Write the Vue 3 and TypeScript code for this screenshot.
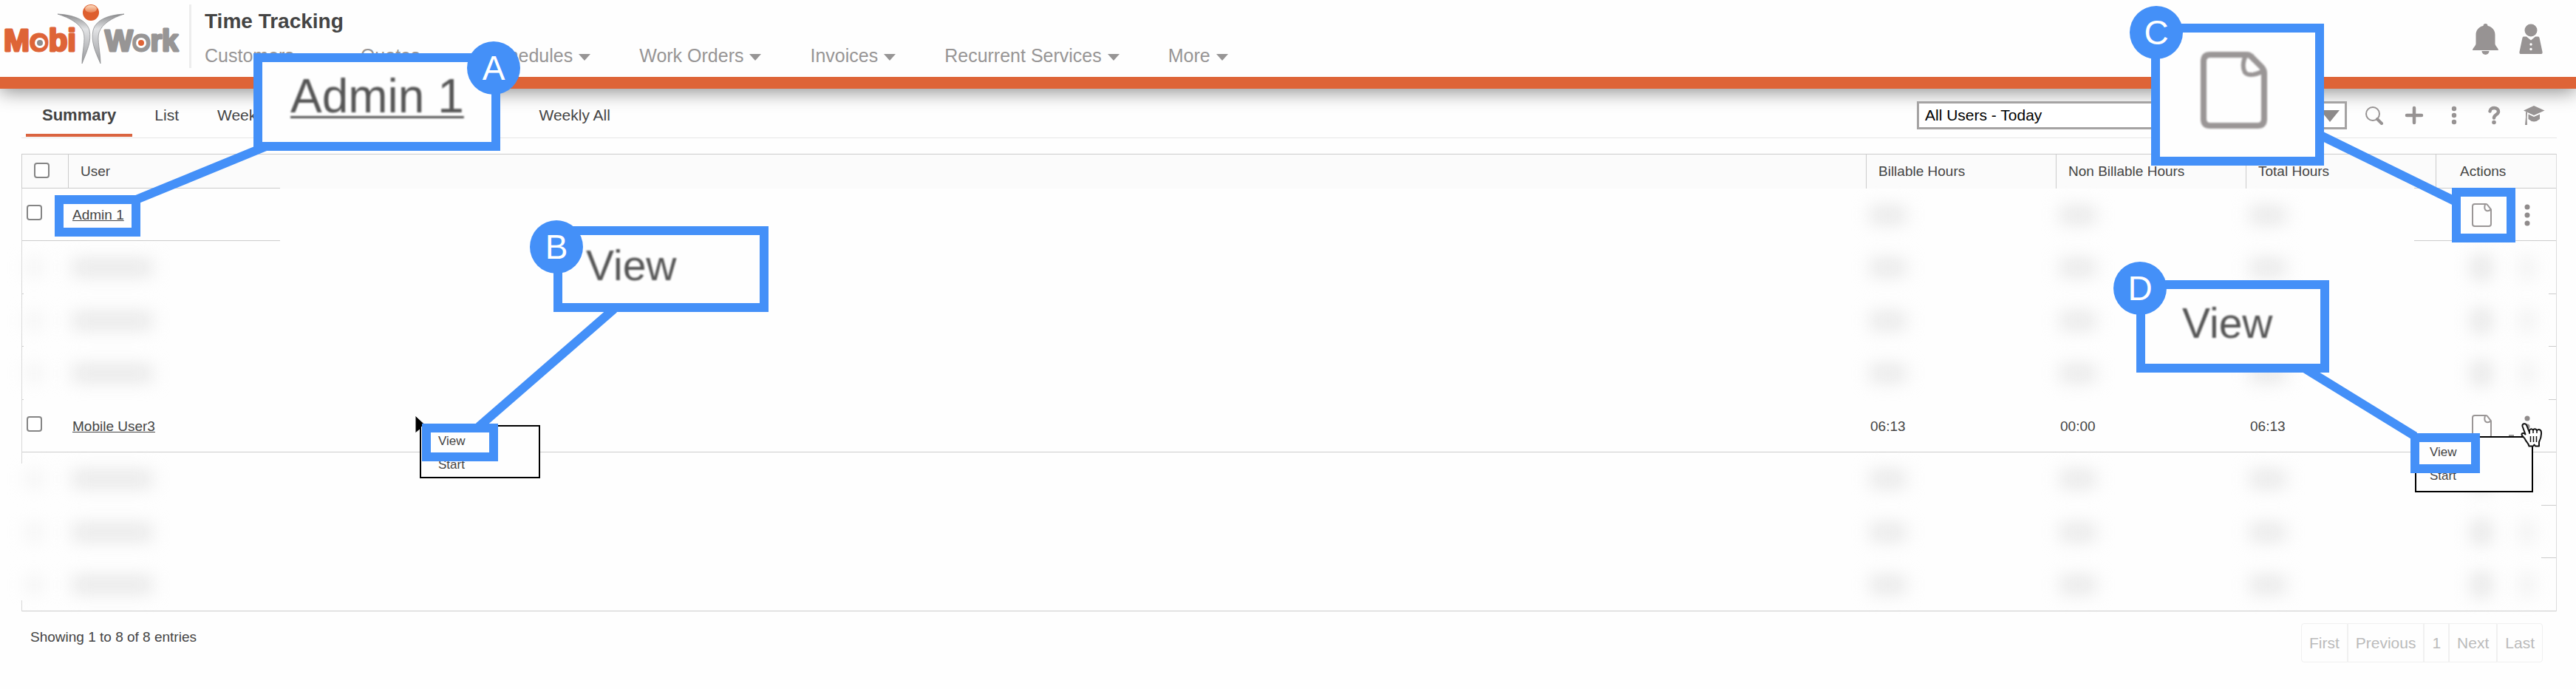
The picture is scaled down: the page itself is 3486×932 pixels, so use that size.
<script setup lang="ts">
interface Row {
  user: string
  hours: string[]
  masked: boolean
  actions: boolean
  edge: string
}

const navItems: string[] = ['Customers', 'Quotes', 'Schedules', 'Work Orders', 'Invoices', 'Recurrent Services', 'More']
const tabs: string[] = ['Summary', 'List', 'Weekly', 'Weekly All']
const hourColumns: string[] = ['Billable Hours', 'Non Billable Hours', 'Total Hours']
const pages: string[] = ['First', 'Previous', '1', 'Next', 'Last']

const masked = (edge: string): Row => ({ user: '', hours: ['', '', ''], masked: true, actions: false, edge })

const rows: Row[] = [
  { user: 'Admin 1', hours: ['', '', ''], masked: false, actions: true, edge: 'edge-wide' },
  masked('edge-tick'),
  masked('edge-tick'),
  masked('edge-tick'),
  { user: 'Mobile User3', hours: ['06:13', '00:00', '06:13'], masked: false, actions: true, edge: 'edge-full' },
  masked('edge-right fade-top'),
  masked('edge-right fade-all'),
  masked('edge-full fade-bottom'),
]
</script>

<template>
  <div class="page">
    <header class="header">
      <a class="logo" href="#" aria-label="MobiWork">
        <svg width="256" height="92" viewBox="0 0 256 92">
          <defs>
            <linearGradient id="wing" x1="0" y1="0" x2="0" y2="1">
              <stop offset="0" stop-color="#8a8a8c" />
              <stop offset="0.3" stop-color="#e2e3e5" />
              <stop offset="1" stop-color="#97989b" />
            </linearGradient>
            <linearGradient id="shine" x1="0" y1="0" x2="0" y2="1">
              <stop offset="0" stop-color="#fbd9bd" />
              <stop offset="1" stop-color="#e98354" />
            </linearGradient>
          </defs>
          <text class="brand brand-mobi" x="5" y="69">Mobi</text>
          <text class="brand brand-work" x="142" y="69">Work</text>
          <circle cx="54" cy="58" r="7" fill="#fff" />
          <circle cx="54" cy="58" r="4" fill="#8f8d8d" />
          <circle cx="191" cy="58" r="7" fill="#fff" />
          <circle cx="191" cy="58" r="4" fill="#de6437" />
          <path d="M78 19C98 20 117 26 121 41C124 56 118 68 111 86C111 70 116 54 113 44C109 32 94 24 78 19Z" fill="url(#wing)" stroke="#85868a" stroke-width="0.7" />
          <path d="M168 19C148 20 130 26 126 41C123 56 128 68 136 86C136 70 131 54 134 44C138 32 152 24 168 19Z" fill="url(#wing)" stroke="#85868a" stroke-width="0.7" />
          <circle cx="123" cy="17" r="11" fill="#de5f2e" />
          <ellipse cx="123" cy="12" rx="8" ry="5" fill="url(#shine)" />
        </svg>
      </a>
      <div class="heading">
        <h1>Time Tracking</h1>
        <nav class="nav">
          <a v-for="item in navItems" :key="item" href="#">
            {{ item }}
            <svg width="16" height="13" viewBox="0 0 16 13"><path d="M0 4H16L8 13Z" fill="currentColor" /></svg>
          </a>
        </nav>
      </div>
      <div class="account">
        <button aria-label="Notifications">
          <svg width="35" height="42" viewBox="0 0 35 42">
            <path d="M17.500 0C19.500 0 20.500 1.300 20.500 3C26.500 4 30.500 9 30.500 15V27C30.500 30 35 33 35 36H0C0 33 4.500 30 4.500 27V15C4.500 9 8.500 4 14.500 3C14.500 1.300 15.500 0 17.500 0Z" fill="currentColor" />
            <path d="M12.500 37H22.500A5 5 0 0 1 12.500 37Z" fill="currentColor" />
          </svg>
        </button>
        <button aria-label="Profile">
          <svg width="32" height="42" viewBox="0 0 32 42">
            <circle cx="16" cy="9" r="8.500" fill="currentColor" />
            <path d="M6 17.500H10L16 22.500L22 17.500H26Q27 17.500 27.500 19L31.500 38Q32 41 30 41H2Q0 41 .5 38L4.500 19Q5 17.500 6 17.500Z" fill="currentColor" />
            <circle cx="16" cy="28" r="1.700" fill="#fff" />
            <circle cx="16" cy="34.500" r="1.700" fill="#fff" />
          </svg>
        </button>
      </div>
    </header>

    <div class="toolbar">
      <nav class="tabs">
        <a v-for="(tab, i) in tabs" :key="tab" href="#" :class="{ active: i === 0, last: i === 3 }">{{ tab }}</a>
      </nav>
      <div class="tools">
        <div class="filter">
          <select aria-label="Filter">
            <option>All Users - Today</option>
          </select>
          <svg width="26" height="16" viewBox="0 0 26 16"><path d="M0 0H26L13 16Z" fill="#8d8a8a" /></svg>
        </div>
        <button aria-label="Search">
          <svg width="26" height="26" viewBox="0 0 26 26" fill="none" stroke="currentColor">
            <circle cx="11" cy="11" r="9" stroke-width="2" />
            <path d="M17 18L23 24" stroke-width="4" stroke-linecap="round" />
          </svg>
        </button>
        <button aria-label="Add">
          <svg width="26" height="26" viewBox="0 0 26 26"><path d="M13 3V23M3 13H23" stroke="currentColor" stroke-width="4.500" stroke-linecap="round" /></svg>
        </button>
        <button aria-label="More options">
          <svg width="26" height="26" viewBox="0 0 26 26" fill="currentColor">
            <circle cx="13" cy="4" r="3.200" /><circle cx="13" cy="13" r="3.200" /><circle cx="13" cy="22" r="3.200" />
          </svg>
        </button>
        <button aria-label="Help">
          <svg width="26" height="26" viewBox="0 0 26 26">
            <path d="M7.500 7.500C8 1.500 19 1.500 19 8C19 12 13 12 13 16.500" fill="none" stroke="currentColor" stroke-width="4.500" stroke-linecap="round" />
            <circle cx="13" cy="22.500" r="2.800" fill="currentColor" />
          </svg>
        </button>
        <button aria-label="Training">
          <svg width="30" height="28" viewBox="0 0 30 28" fill="currentColor">
            <path d="M15 1L29.500 7.500L15 14L1 7.500Z" />
            <path d="M7.500 12.500L15 16L23 12.500V19Q15 26 7.500 19Z" />
            <path d="M4 9L6 10L5.500 17L6 27H3L4 17Z" />
          </svg>
        </button>
      </div>
    </div>

    <main class="content">
      <table>
        <colgroup>
          <col class="col-check" /><col />
          <col v-for="c in hourColumns" :key="c" class="col-hours" />
          <col class="col-actions" />
        </colgroup>
        <thead>
          <tr class="edge-wide">
            <th class="check"><input type="checkbox" aria-label="Select all" /></th>
            <th>User</th>
            <th v-for="c in hourColumns" :key="c">{{ c }}</th>
            <th class="actions-head">Actions</th>
          </tr>
        </thead>
        <tbody>
          <tr v-for="(row, i) in rows" :key="i" :class="[row.edge, { masked: row.masked }]">
            <td class="check">
              <i v-if="row.masked" class="smudge smudge-check"></i>
              <input v-else type="checkbox" :aria-label="row.user" />
            </td>
            <td>
              <i v-if="row.masked" class="smudge smudge-user"></i>
              <a v-else href="#">{{ row.user }}</a>
            </td>
            <td v-for="(h, n) in row.hours" :key="n">
              <template v-if="h">{{ h }}</template>
              <i v-else class="smudge smudge-hours"></i>
            </td>
            <td>
              <div class="row-actions">
                <template v-if="row.actions">
                  <button aria-label="View details">
                    <svg width="27" height="32" viewBox="0 0 27 32" fill="none" stroke="#9a9696" stroke-width="2">
                      <path d="M4 1H19Q20 1 21 2L25 7Q26 8 26 9V28Q26 31 23 31H4Q1 31 1 28V4Q1 1 4 1Z" />
                      <path d="M18 1Q16 9 20 10Q23 11 26 8" />
                    </svg>
                  </button>
                  <button aria-label="Row menu">
                    <svg width="8" height="30" viewBox="0 0 8 30" fill="#8f8b8b">
                      <circle cx="4" cy="4" r="3.500" /><circle cx="4" cy="15" r="3.500" /><circle cx="4" cy="26" r="3.500" />
                    </svg>
                  </button>
                </template>
                <template v-else>
                  <i class="smudge smudge-doc"></i>
                  <i class="smudge smudge-dots"></i>
                </template>
              </div>
            </td>
          </tr>
        </tbody>
      </table>
      <footer class="footer">
        <span>Showing 1 to 8 of 8 entries</span>
        <div class="pager">
          <button v-for="p in pages" :key="p">{{ p }}</button>
        </div>
      </footer>
    </main>

    <div class="layer layer-left">
      <svg class="pointer-arrow" width="20" height="30" viewBox="0 0 20 30"><path d="M1 1V25L7 20L11 29L15 27L11 18H19Z" fill="#000" stroke="#fff" /></svg>
      <div class="menu menu-b"><button>View</button><button>Start</button></div>
      <svg class="lines" width="1100" height="700" viewBox="0 0 1100 700">
        <path d="M360 198L182 271M831 418L648 577" />
      </svg>
      <div class="target target-a"></div>
      <div class="target target-b"></div>
      <div class="callout callout-a"><span class="zoomed underlined">Admin 1</span></div>
      <div class="callout callout-b"><span class="zoomed">View</span></div>
      <span class="badge badge-a">A</span>
      <span class="badge badge-b">B</span>
    </div>

    <div class="layer layer-right">
      <div class="menu menu-d"><button>View</button><button>Start</button></div>
      <svg class="lines" width="640" height="700" viewBox="0 0 640 700">
        <path d="M290 181L478 273M269 496L422 590" />
      </svg>
      <div class="target target-c"></div>
      <div class="target target-d"></div>
      <div class="callout callout-c">
        <svg class="zoomed" width="92" height="106" viewBox="0 0 92 106" fill="none" stroke="#9a9696">
          <path d="M14 5H63Q68 5 71 9L83 21Q87 25 87 30V92Q87 101 78 101H14Q5 101 5 92V14Q5 5 14 5Z" stroke-width="8" />
          <path d="M62 6Q56 20 61 29Q68 36 86 27" stroke-width="6" />
        </svg>
      </div>
      <div class="callout callout-d"><span class="zoomed">View</span></div>
      <span class="badge badge-c">C</span>
      <span class="badge badge-d">D</span>
      <svg class="pointer-hand" width="30" height="34" viewBox="0 0 30 34">
        <path d="M2.500 4.500C2 1 6.500 0 8 3L12 13L12 10C13 7.500 16 7.500 17 10C18 7.500 21 7.500 22 10.500C24 8 28 9 28 13C28.500 19 27 22 25 26V31.500H20L18.500 29.500L17 31.500H11.500C11 28 8 26 6.500 23C5.500 20 2 18 1.500 16C1.500 13.500 4.500 13.500 6.500 15.500Z" fill="#fff" stroke="#111" stroke-width="2" stroke-linejoin="round" />
        <path d="M13.500 18V26M17.500 18V26M21.500 18V26M12 13V15M17 10V14M22 11V14" stroke="#111" stroke-width="1.500" />
      </svg>
    </div>
  </div>
</template>

<style>
body {
  background: #fefefe;
}
</style>

<style scoped>
.page {
  position: relative;
  min-height: 100vh;
  overflow: hidden;
  color: #444;
  font-family: "Liberation Sans", Arial, sans-serif;
  font-size: 19px;
}
.page *,
.page *::before {
  box-sizing: border-box;
}
a {
  color: inherit;
  text-decoration: none;
}
button {
  margin: 0;
  padding: 0;
  border: 0;
  background: none;
  color: #979393;
  font: inherit;
}
svg {
  display: block;
}
.header {
  display: flex;
  height: 120px;
  border-bottom: 16px solid #de6437;
  box-shadow: 0 4px 24px rgba(0, 0, 0, 0.45);
}
.brand {
  font-weight: bold;
  stroke-width: 3;
  stroke-linejoin: round;
}
.brand-mobi {
  fill: #de6437;
  stroke: #de6437;
  font-size: 42px;
}
.brand-work {
  fill: #979595;
  stroke: #979595;
  font-size: 40px;
}
.heading {
  position: relative;
  flex: 1;
  padding: 13px 0 0 21px;
}
.heading::before {
  content: "";
  position: absolute;
  left: 0;
  top: 6px;
  width: 3px;
  height: 86px;
  background: #ededed;
}
h1 {
  margin: 0 0 14px;
  font-size: 28px;
  line-height: 32px;
}
.nav {
  display: flex;
  gap: 66px;
  color: #979595;
  font-size: 25px;
  line-height: 32px;
  white-space: nowrap;
}
.nav a {
  display: flex;
  align-items: center;
  gap: 8px;
}
.account {
  display: flex;
  gap: 28px;
  padding: 32px 45px 0 0;
  align-items: flex-start;
}
.toolbar {
  display: flex;
  justify-content: space-between;
  height: 67px;
  margin: 0 26px 21px 29px;
  border-bottom: 1px solid #e6e6e6;
}
.tabs {
  display: flex;
  gap: 8px;
  padding-left: 6px;
  font-size: 21px;
}
.tabs a {
  padding: 24px 22px 0;
  height: 65px;
  line-height: 24px;
  white-space: nowrap;
}
.tabs .active {
  border-bottom: 4px solid #da6440;
  font-size: 22px;
  font-weight: bold;
}
.tabs .last {
  margin-left: 315px;
}
.tools {
  display: flex;
  align-items: center;
  padding: 6px 4px 0 0;
}
.tools button {
  display: flex;
  justify-content: center;
  width: 54px;
}
.filter {
  position: relative;
  width: 582px;
  margin-right: 10px;
}
.filter select {
  display: block;
  width: 100%;
  height: 38px;
  padding: 0 8px 2px;
  border: 3px solid #a5a3a3;
  border-radius: 0;
  background: #fff;
  color: #000;
  font: 21px "Liberation Sans", Arial, sans-serif;
  appearance: none;
}
.filter svg {
  position: absolute;
  right: 10px;
  top: 12px;
}
.content {
  padding: 0 26px 0 29px;
}
table {
  width: 100%;
  table-layout: fixed;
  border-collapse: separate;
  border-spacing: 0;
  border-top: 1px solid #ccc;
  border-right: 1px solid #ddd;
}
.col-check {
  width: 63px;
}
.col-hours {
  width: 257px;
}
.col-actions {
  width: 163px;
}
tr {
  --left: 3px;
  --right: 10px;
  background-image: linear-gradient(#ccc, #ccc), linear-gradient(#ccc, #ccc);
  background-repeat: no-repeat;
  background-position: left bottom, right bottom;
  background-size: var(--left) 1px, var(--right) 1px;
}
.edge-wide {
  --left: 350px;
  --right: 192px;
}
.edge-full {
  --left: 100%;
}
.edge-right {
  --left: 0px;
  --right: 20px;
}
thead tr {
  background-color: #fbfbfb;
}
th {
  height: 46px;
  padding: 0 0 0 16px;
  border-left: 1px solid #ccc;
  font-weight: normal;
  text-align: left;
}
th.check {
  padding-left: 16px;
}
th.check input {
  margin-bottom: 3px;
}
th.actions-head {
  padding-left: 32px;
}
td {
  height: 71px;
  padding: 0 0 0 6px;
  vertical-align: middle;
}
tr:nth-child(even) td {
  height: 72px;
}
td:first-child {
  border-left: 1px solid #d8d8d8;
}
td.check input {
  margin-bottom: 7px;
}
td a {
  text-decoration: underline;
}
.fade-top td:first-child,
.fade-all td:first-child,
.fade-bottom td:first-child {
  padding-left: 7px;
  border-left: 0;
}
.fade-top td:first-child {
  background: linear-gradient(#d8d8d8, #d8d8d8) left top / 1px 15px no-repeat;
}
.fade-bottom td:first-child {
  background: linear-gradient(#d8d8d8, #d8d8d8) left bottom / 1px 15px no-repeat;
}
input[type="checkbox"] {
  display: block;
  width: 21px;
  height: 21px;
  margin: 0;
  border: 2px solid #858585;
  border-radius: 4px;
  background: #fff;
  appearance: none;
}
.smudge {
  display: block;
  height: 20px;
  background: #e3e3e3;
  filter: blur(12px);
}
.smudge-check {
  width: 20px;
  background: #f0f0f0;
}
.smudge-user {
  width: 108px;
}
.smudge-hours {
  width: 48px;
}
.smudge-doc {
  width: 26px;
  height: 30px;
}
.smudge-dots {
  width: 10px;
  height: 30px;
}
.row-actions {
  display: flex;
  align-items: center;
  gap: 44px;
  padding-left: 43px;
}
.footer {
  display: flex;
  justify-content: space-between;
  align-items: flex-start;
  padding: 16px 19px 0 12px;
}
.footer span {
  line-height: 38px;
}
.pager {
  display: flex;
}
.pager button {
  height: 53px;
  padding: 0 10px;
  border: 1px solid #f0f0f0;
  color: #bbb;
  font-size: 21px;
}
.pager button:first-child {
  border-radius: 4px 0 0 4px;
}
.pager button:last-child {
  border-radius: 0 4px 4px 0;
}
.layer {
  position: absolute;
  top: 0;
  height: 700px;
}
.layer-left {
  left: 0;
  width: 1100px;
}
.layer-right {
  right: 0;
  width: 640px;
}
.layer > * {
  position: absolute;
}
.lines {
  left: 0;
  top: 0;
  fill: none;
  stroke: #4490f8;
  stroke-width: 12;
}
.target,
.callout {
  border: 12px solid #4490f8;
}
.callout {
  display: flex;
  background: #fefefe;
  color: #555;
  font-size: 57px;
  line-height: 64px;
}
.zoomed {
  filter: blur(1px);
}
.target-a {
  left: 74px;
  top: 264px;
  width: 116px;
  height: 56px;
}
.callout-a {
  left: 343px;
  top: 72px;
  width: 334px;
  height: 132px;
  padding: 14px 38px;
  font-size: 64px;
}
.underlined {
  text-decoration: underline;
  text-decoration-thickness: 3px;
  text-underline-offset: 5px;
  white-space: nowrap;
}
.target-b {
  left: 571px;
  top: 573px;
  width: 103px;
  height: 51px;
}
.callout-b {
  left: 749px;
  top: 306px;
  width: 291px;
  height: 116px;
  padding: 9px 32px;
}
.target-c {
  left: 472px;
  top: 254px;
  width: 86px;
  height: 74px;
}
.callout-c {
  left: 65px;
  top: 32px;
  width: 234px;
  height: 192px;
  padding: 25px 54px;
}
.target-d {
  left: 416px;
  top: 586px;
  width: 94px;
  height: 54px;
}
.callout-d {
  left: 45px;
  top: 379px;
  width: 261px;
  height: 125px;
  padding: 14px 50px;
}
.badge {
  width: 72px;
  height: 72px;
  border-radius: 50%;
  background: #4490f8;
  color: #fff;
  font-size: 46px;
  line-height: 72px;
  text-align: center;
}
.badge-a {
  left: 632px;
  top: 56px;
}
.badge-b {
  left: 717px;
  top: 298px;
}
.badge-c {
  left: 36px;
  top: 8px;
}
.badge-d {
  left: 14px;
  top: 354px;
}
.menu {
  display: flex;
  flex-direction: column;
  align-items: flex-start;
  gap: 12px;
  border: 2px solid #000;
  background: #fefefe;
  font-size: 17px;
  line-height: 20px;
}
.menu button {
  color: #444;
}
.menu-b {
  left: 568px;
  top: 575px;
  width: 163px;
  height: 72px;
  padding: 10px 23px;
}
.menu-d {
  left: 422px;
  top: 590px;
  width: 160px;
  height: 76px;
  padding: 10px 18px;
}
.menu-d::before {
  content: "";
  position: absolute;
  left: 125px;
  top: -4px;
  width: 7px;
  height: 2px;
  background: #999;
}
.pointer-arrow {
  left: 561px;
  top: 561px;
}
.pointer-hand {
  left: 565px;
  top: 572px;
}
</style>
